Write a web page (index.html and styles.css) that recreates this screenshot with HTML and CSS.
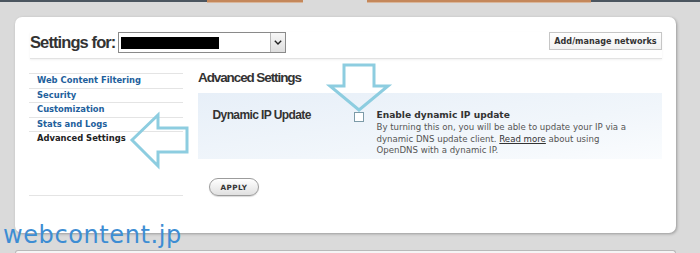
FILE: index.html
```html
<!DOCTYPE html>
<html lang="en">

<head>
    <meta charset="UTF-8">
    <meta name="viewport" content="width=device-width, initial-scale=1.0">
    <title>Advanced Settings</title>
    <link rel="stylesheet" href="styles.css">
</head>

<body>

    <!-- Top navigation strip (cut off) -->
    <div class="topbar">
        <div class="seg seg-dark"></div>
        <div class="seg seg-orange seg-orange-1"></div>
        <div class="seg seg-gap"></div>
        <div class="seg seg-orange seg-orange-2"></div>
        <div class="seg seg-dark seg-fill"></div>
    </div>

    <div class="panel">
        <div class="panel-head">
            <div class="settings-for">
                <span class="settings-label">Settings for:</span>
                <div class="net-select">
                    <span class="redacted"></span>
                    <span class="select-btn">
                        <svg width="8" height="5" viewBox="0 0 8 5">
                            <path d="M0.8 0.8 L4 4 L7.2 0.8" fill="none" stroke="#222" stroke-width="1.4"/>
                        </svg>
                    </span>
                </div>
            </div>
            <a class="add-btn" href="#">Add/manage networks</a>
        </div>

        <div class="panel-body">
            <!-- Left menu -->
            <div class="side-nav">
                <a href="#">Web Content Filtering</a>
                <a href="#">Security</a>
                <a href="#">Customization</a>
                <a href="#">Stats and Logs</a>
                <a href="#" class="current">Advanced Settings</a>
            </div>

            <!-- Settings content -->
            <div class="main">
                <h2>Advanced Settings</h2>
                <div class="option-box">
                    <div class="option-label">Dynamic IP Update</div>
                    <input type="checkbox" class="check">
                    <div class="option-text">
                        <div class="option-title">Enable dynamic IP update</div>
                        <p>By turning this on, you will be able to update your IP via a dynamic DNS update client. <a href="#">Read more</a> about using OpenDNS with a dynamic IP.</p>
                    </div>
                </div>
                <button class="apply-btn">APPLY</button>
            </div>
        </div>

        <!-- Annotation arrows drawn over the screenshot -->
        <svg class="arrows" width="661" height="216" viewBox="0 0 661 216">
            <polygon points="329,48 359,48 359,69 373,69 344,93 315,69 329,69" />
            <polygon points="117,123 143,98 143,111 172,111 172,135 143,135 143,149" />
        </svg>
    </div>

    <div class="panel-next"></div>

    <div class="watermark">webcontent.jp</div>

</body>

</html>
```

FILE: styles.css
```css
body {
    margin: 0;
    height: 253px;
    overflow: hidden;
    position: relative;
    background-color: #dadada;
    font-family: "DejaVu Sans", Verdana, sans-serif;
}

/* Top strip */
.topbar {
    display: flex;
    align-items: flex-start;
    height: 3px;
}

.seg-dark {
    width: 207px;
    height: 2px;
    background-color: #4b555f;
}

.seg-fill {
    flex: 1;
}

.seg-orange {
    height: 2px;
    background-color: #c4875a;
    border-bottom: 1px solid #d9b69a;
}

.seg-orange-1 { width: 96px; }
.seg-gap { width: 64px; }
.seg-orange-2 { width: 224px; }

/* Main white panel */
.panel {
    position: relative;
    box-sizing: border-box;
    width: 661px;
    height: 216px;
    margin: 14px 0 0 15px;
    padding: 15px 14px 0 15px;
    background-color: #fff;
    border-radius: 7px;
    box-shadow: 1px 1px 3px rgba(0, 0, 0, 0.3);
}

.panel-head {
    display: flex;
    justify-content: space-between;
    align-items: flex-start;
    height: 21px;
    padding-bottom: 5px;
    border-bottom: 1px solid #e2e2e2;
    box-shadow: 0 1px 2px rgba(0, 0, 0, 0.06);
}

.settings-for {
    display: flex;
    align-items: center;
    gap: 3px;
    height: 21px;
}

.settings-label {
    font-family: "Liberation Sans", Arial, sans-serif;
    font-weight: bold;
    font-size: 16.5px;
    letter-spacing: -0.9px;
    color: #333;
}

.net-select {
    display: flex;
    align-items: center;
    box-sizing: border-box;
    width: 168px;
    height: 21px;
    padding-left: 2px;
    border: 1px solid #8a8a8a;
    background-color: #fff;
}

.redacted {
    width: 98px;
    height: 12px;
    background-color: #000;
}

.select-btn {
    display: flex;
    align-items: center;
    justify-content: center;
    margin-left: auto;
    width: 14px;
    height: 100%;
    border-left: 1px solid #b8b8b8;
    background: linear-gradient(#f7f7f7, #dedede);
}

.add-btn {
    display: flex;
    align-items: center;
    justify-content: center;
    box-sizing: border-box;
    width: 113px;
    height: 18px;
    border: 1px solid #c6c6c6;
    background: linear-gradient(#fff, #f1f1f1);
    font-weight: bold;
    font-size: 8.1px;
    color: #333;
    text-decoration: none;
}

.panel-body {
    display: flex;
    gap: 15px;
}

/* Left menu */
.side-nav {
    width: 154px;
    margin-top: 14px;
    margin-left: -1px;
    border-bottom: 1px solid #e4e4e4;
}

.side-nav a {
    display: block;
    height: 13.6px;
    line-height: 13.6px;
    padding-left: 8px;
    border-top: 1px solid #e4e4e4;
    font-weight: bold;
    font-size: 8.4px;
    color: #22609c;
    text-decoration: none;
}

.side-nav a.current {
    color: #222;
}

/* Content */
.main {
    flex: 1;
}

.main h2 {
    margin: 11px 0 7px 0;
    font-family: "Liberation Sans", Arial, sans-serif;
    font-size: 13.5px;
    line-height: 16px;
    letter-spacing: -1.1px;
    color: #333;
}

.option-box {
    display: flex;
    align-items: flex-start;
    box-sizing: border-box;
    height: 66px;
    padding: 15px 0 0 14.5px;
    background: linear-gradient(172deg, #e7eff8 0%, #f1f6fb 60%, #fafcfe 100%);
}

.option-label {
    width: 141px;
    flex: none;
    font-family: "Liberation Sans", Arial, sans-serif;
    font-weight: bold;
    font-size: 12px;
    line-height: 14px;
    letter-spacing: -0.6px;
    color: #333;
}

.check {
    appearance: none;
    box-sizing: border-box;
    width: 10px;
    height: 10px;
    margin: 3.5px 13px 0 0;
    border: 1px solid #7d9ba8;
    background-color: #fff;
}

.option-text {
    width: 258px;
    margin-top: 1px;
}

.option-title {
    font-weight: bold;
    font-size: 9.1px;
    line-height: 12px;
    color: #333;
}

.option-text p {
    margin: 1px 0 0 0;
    font-size: 8.6px;
    line-height: 11.6px;
    color: #555;
}

.option-text p a {
    color: #333;
}

.apply-btn {
    display: block;
    box-sizing: border-box;
    width: 50px;
    height: 18px;
    margin: 19px 0 0 11px;
    padding: 0;
    border: 1px solid #9c9c9c;
    border-radius: 9px;
    background: linear-gradient(#fff, #e0e0e0);
    box-shadow: 0 1px 1px rgba(0, 0, 0, 0.15);
    font-family: "DejaVu Sans", Verdana, sans-serif;
    font-weight: bold;
    font-size: 7.2px;
    letter-spacing: 0.4px;
    color: #333;
}

/* Annotation arrows */
.arrows {
    position: absolute;
    left: 0;
    top: 0;
    pointer-events: none;
}

.arrows polygon {
    fill: none;
    stroke: #8dcde0;
    stroke-width: 3;
    stroke-linejoin: miter;
}

/* Next panel, cut off at bottom */
.panel-next {
    box-sizing: border-box;
    width: 661px;
    height: 3px;
    margin: 17px 0 0 15px;
    border: 1px solid #b9b9b9;
    border-bottom: none;
    border-radius: 6px 6px 0 0;
    background-color: #f5f5f5;
}

/* Site watermark */
.watermark {
    position: absolute;
    left: 3px;
    top: 221px;
    font-family: "DejaVu Sans", sans-serif;
    font-size: 24px;
    line-height: 28px;
    letter-spacing: 0.6px;
    color: #3d8dd3;
}
```
